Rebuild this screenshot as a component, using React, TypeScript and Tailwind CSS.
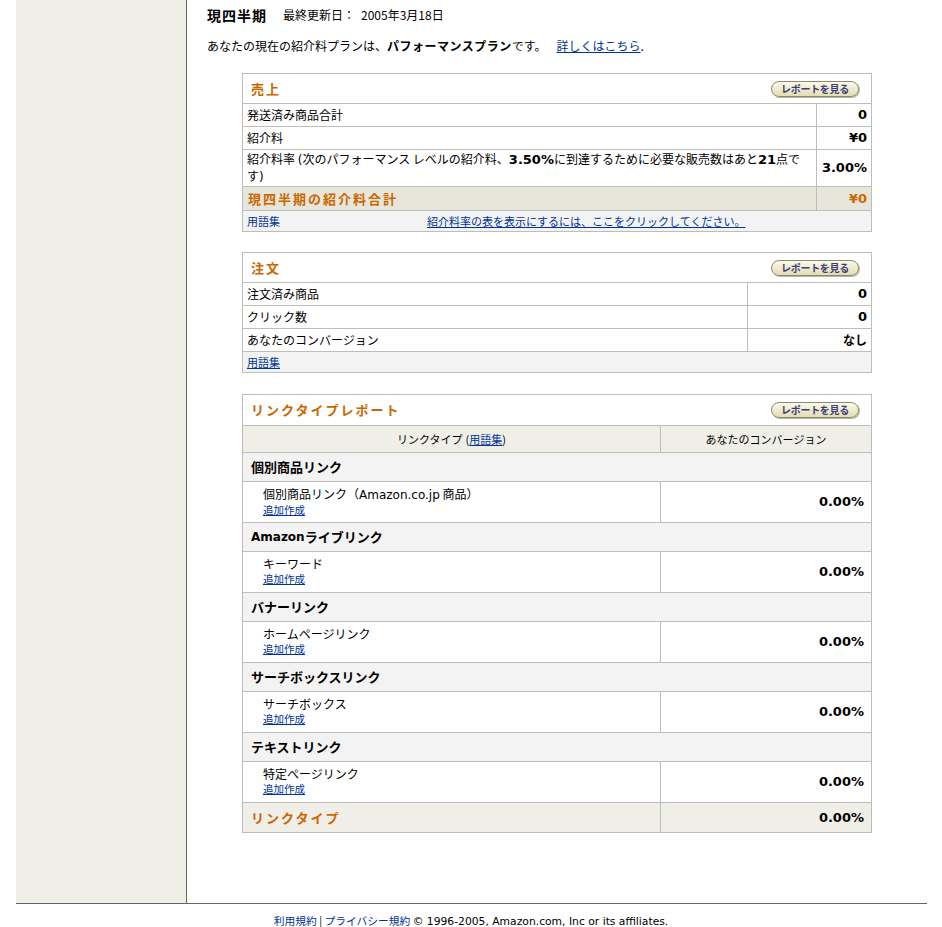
import React from "react";

const BORDER = "border-[#bdbdbd]";

function ReportButton() {
  return (
    <span className="inline-flex h-[16px] w-[88px] items-center justify-center rounded-full border border-[#8c8a6c] bg-[linear-gradient(#fcfaea,#e2ddb4)] text-[10px] font-bold leading-none tracking-[-0.3px] text-[#3d3d7a] shadow-[1px_1px_0_#b9b59a]">
      レポートを見る
    </span>
  );
}

function SectionHeader({ title, h = "h-[30px]" }: { title: string; h?: string }) {
  return (
    <div className={`flex ${h} items-center justify-between border-b ${BORDER} pl-[8px] pr-[12px]`}>
      <span className="text-[13px] font-bold tracking-[2px] text-[#cc6600]">{title}</span>
      <ReportButton />
    </div>
  );
}

function Link({
  children,
  className = "",
  plain = false,
}: {
  children: React.ReactNode;
  className?: string;
  plain?: boolean;
}) {
  return <a className={`text-[#003399] ${plain ? "no-underline" : "underline"} ${className}`}>{children}</a>;
}

const num = "font-['DejaVu_Sans','Noto_Sans_CJK_JP',sans-serif] font-bold text-[13px]";

function ValueRow({
  label,
  value,
  vw,
  h = "h-[23px]",
}: {
  label: React.ReactNode;
  value: React.ReactNode;
  vw: string;
  h?: string;
}) {
  return (
    <div className={`flex ${h} border-b ${BORDER}`}>
      <div className="flex flex-1 items-center pl-[4px] text-[12px] leading-[14px]">{label}</div>
      <div className={`flex ${vw} items-center justify-end border-l ${BORDER} pr-[4px] ${num}`}>{value}</div>
    </div>
  );
}

function Category({ children }: { children: React.ReactNode }) {
  return (
    <div className={`flex h-[29px] items-center border-b ${BORDER} bg-[#f3f3f3] pl-[8px] text-[13px] font-bold`}>
      {children}
    </div>
  );
}

function Item({ label }: { label: React.ReactNode }) {
  return (
    <div className={`flex h-[41px] border-b ${BORDER}`}>
      <div className="flex w-[417px] flex-col pl-[20px] pt-[5px]">
        <span className="text-[12px] leading-[14px]">{label}</span>
        <Link className="mt-[1px] text-[10.5px] leading-[13px]">追加作成</Link>
      </div>
      <div className={`flex flex-1 items-center justify-end border-l ${BORDER} pr-[7px] ${num}`}>0.00%</div>
    </div>
  );
}

export default function App() {
  return (
    <div className="min-h-[927px] w-[942px] bg-white font-['Noto_Sans_CJK_JP',sans-serif] text-black">
      <div className="ml-[16px] mr-[15px] flex border-b border-[#666666]">
        <aside className="w-[171px] shrink-0 border-r border-[#666666] bg-[#efefe7]" />
        <main className="flex-1 pb-[70px] pl-[20px] pt-[6px]">
          <div className="flex h-[18px] items-center">
            <span className="text-[14px] font-bold tracking-[1px]">現四半期</span>
            <span className="ml-[16px] text-[12px]">最終更新日：</span>
            <span className="ml-[6px] text-[12px]">2005年3月18日</span>
          </div>
          <p className="mt-[15px] text-[12px] leading-[14px]">
            あなたの現在の紹介料プランは、<b className="tracking-[0.5px]">パフォーマンスプラン</b>です。
            <Link className="ml-[10px]">詳しくはこちら</Link>.
          </p>

          {/* 売上 */}
          <div className={`ml-[35px] mt-[20px] w-[630px] border ${BORDER}`}>
            <SectionHeader title="売上" />
            <ValueRow vw="w-[55px]" label="発送済み商品合計" value="0" />
            <ValueRow vw="w-[55px]" label="紹介料" value="¥0" />
            <ValueRow
              vw="w-[55px]"
              h="h-[37px]"
              label={
                <span className="block leading-[15px]">
                  <span className="whitespace-nowrap">
                    紹介料率 <span className="font-['DejaVu_Sans','Noto_Sans_CJK_JP']">(</span>次のパフォーマンス レベルの紹介料、
                    <span className={`${num} leading-none`}>3.50%</span>に到達するために必要な販売数はあと
                    <span className={`${num} leading-none`}>21</span>点で
                  </span>
                  <br />
                  す<span className="font-['DejaVu_Sans','Noto_Sans_CJK_JP']">)</span>
                </span>
              }
              value="3.00%"
            />
            <div className={`flex h-[24px] border-b ${BORDER} bg-[#e6e6da]`}>
              <div className="flex flex-1 items-center pl-[5px] text-[13px] font-bold tracking-[2px] text-[#cc6600]">
                現四半期の紹介料合計
              </div>
              <div className={`flex w-[55px] items-center justify-end border-l ${BORDER} pr-[4px] ${num} text-[#cc6600]`}>
                ¥0
              </div>
            </div>
            <div className="flex h-[20px] items-center bg-[#f3f3f3] pl-[4px] text-[11px]">
              <Link plain className="w-[180px]">
                用語集
              </Link>
              <Link>紹介料率の表を表示にするには、ここをクリックしてください。</Link>
            </div>
          </div>

          {/* 注文 */}
          <div className={`ml-[35px] mt-[20px] w-[630px] border ${BORDER}`}>
            <SectionHeader title="注文" />
            <ValueRow vw="w-[124px]" label="注文済み商品" value="0" />
            <ValueRow vw="w-[124px]" label="クリック数" value="0" />
            <ValueRow
              vw="w-[124px]"
              label="あなたのコンバージョン"
              value={<span className="font-['Noto_Sans_CJK_JP'] text-[12px] font-bold">なし</span>}
            />
            <div className="flex h-[20px] items-center bg-[#f3f3f3] pl-[4px] text-[11px]">
              <Link>用語集</Link>
            </div>
          </div>

          {/* リンクタイプレポート */}
          <div className={`ml-[35px] mt-[21px] w-[630px] border ${BORDER}`}>
            <SectionHeader title="リンクタイプレポート" h="h-[31px]" />
            <div className={`flex h-[27px] border-b ${BORDER} bg-[#efefe7] text-[11px]`}>
              <div className="flex w-[417px] items-center justify-center">
                リンクタイプ <span className="ml-[3px]">(</span>
                <Link>用語集</Link>)
              </div>
              <div className={`flex flex-1 items-center justify-center border-l ${BORDER}`}>あなたのコンバージョン</div>
            </div>
            <Category>個別商品リンク</Category>
            <Item
              label={
                <>
                  個別商品リンク（<span className="font-['DejaVu_Sans']">Amazon.co.jp</span> 商品）
                </>
              }
            />
            <Category>
              <span className="font-['DejaVu_Sans'] text-[12px]">Amazon</span>ライブリンク
            </Category>
            <Item label="キーワード" />
            <Category>バナーリンク</Category>
            <Item label="ホームページリンク" />
            <Category>サーチボックスリンク</Category>
            <Item label="サーチボックス" />
            <Category>テキストリンク</Category>
            <Item label="特定ページリンク" />
            <div className="flex h-[29px] bg-[#efefe7]">
              <div className="flex w-[417px] items-center pl-[8px] text-[13px] font-bold tracking-[2px] text-[#cc6600]">
                リンクタイプ
              </div>
              <div className={`flex flex-1 items-center justify-end border-l ${BORDER} pr-[7px] ${num}`}>0.00%</div>
            </div>
          </div>
        </main>
      </div>
      <footer className="pt-[10px] text-center text-[10.75px] leading-[13px]">
        <Link plain>利用規約</Link> | <Link plain>プライバシー規約</Link>{" "}
        <span className="font-['DejaVu_Sans']">© 1996-2005, Amazon.com, Inc or its affiliates.</span>
      </footer>
    </div>
  );
}
